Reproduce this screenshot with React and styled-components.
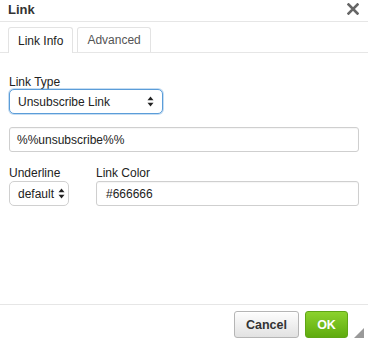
import React from "react";
import styled, { createGlobalStyle } from "styled-components";

const Global = createGlobalStyle`
  html, body { margin: 0; padding: 0; background: #fff; }
  body { font-family: "Liberation Sans", Arial, sans-serif; font-size: 12px; color: #222; }
  * { box-sizing: border-box; }
`;

const Dialog = styled.div`
  width: 368px;
  height: 340px;
  display: flex;
  flex-direction: column;
  background: #fff;
`;

const Header = styled.div`
  height: 22px;
  display: flex;
  align-items: center;
  justify-content: space-between;
  padding: 0 9px 3px 8px;
  border-bottom: 1px solid #e6e6e6;
`;

const Title = styled.div`
  font-weight: bold;
  font-size: 13px;
  color: #333;
`;

const Close = styled.div`
  width: 13px;
  height: 13px;
  display: flex;
  align-items: center;
  justify-content: center;
`;

const TabBar = styled.div`
  display: flex;
  align-items: flex-end;
  gap: 4px;
  height: 31px;
  padding: 0 8px;
  border-bottom: 1px solid #e6e6e6;
`;

const Tab = styled.div`
  height: ${(p) => (p.$active ? "26px" : "25px")};
  margin-bottom: ${(p) => (p.$active ? "-1px" : "0")};
  padding: 0 9px;
  display: flex;
  align-items: center;
  border: 1px solid #e3e3e3;
  border-bottom: none;
  border-radius: 3px 3px 0 0;
  background: #fff;
  color: ${(p) => (p.$active ? "#222" : "#555")};
  font-size: 12px;
`;

const Body = styled.div`
  flex: 1;
  padding: 23px 9px 0 9px;
  display: flex;
  flex-direction: column;
`;

const Field = styled.div`
  display: flex;
  flex-direction: column;
  width: ${(p) => p.$width || "auto"};
  flex: ${(p) => (p.$grow ? 1 : "none")};
`;

const Label = styled.div`
  font-size: 12px;
  color: #222;
  line-height: 13px;
  margin-bottom: ${(p) => p.$mb || "0"};
`;

const SelectBox = styled.div`
  height: 25px;
  width: ${(p) => p.$width};
  display: flex;
  align-items: center;
  justify-content: space-between;
  padding: 0 ${(p) => (p.$focus ? "8px" : "3px")} 0 8px;
  border: 1px solid ${(p) => (p.$focus ? "#5b9dd9" : "#d0d0d0")};
  box-shadow: ${(p) => (p.$focus ? "0 0 0 1px rgba(91,157,217,0.35)" : "none")};
  border-radius: 5px;
  background: #fff;
  color: #222;
  font-size: 12px;
  white-space: nowrap;
`;

const TextBox = styled.div`
  height: 25px;
  display: flex;
  align-items: center;
  padding: 0 ${(p) => p.$pad || "7px"};
  border: 1px solid #cfcfcf;
  border-radius: 3px;
  background: #fff;
  color: #222;
  font-size: 12px;
  box-shadow: inset 0 1px 1px rgba(0,0,0,0.04);
`;

const Row = styled.div`
  display: flex;
  gap: ${(p) => p.$gap || "0"};
  margin-top: ${(p) => p.$mt || "0"};
`;

const Footer = styled.div`
  height: 36px;
  border-top: 1px solid #e6e6e6;
  display: flex;
  justify-content: flex-end;
  align-items: flex-start;
  gap: 6px;
  padding: 6px 20px 0 0;
  position: relative;
`;

const Button = styled.div`
  height: 27px;
  width: ${(p) => p.$width};
  display: flex;
  align-items: center;
  justify-content: center;
  border-radius: 3px;
  font-weight: bold;
  font-size: 12.5px;
  border: 1px solid ${(p) => (p.$primary ? "#5fa516" : "#b5b5b5")};
  background: ${(p) =>
    p.$primary
      ? "linear-gradient(#8bd22d, #5fab0f)"
      : "linear-gradient(#fdfdfd, #e2e2e2)"};
  color: ${(p) => (p.$primary ? "#fff" : "#333")};
  box-shadow: ${(p) => (p.$primary ? "none" : "inset 0 1px 0 #fff")};
`;

const Resize = styled.div`
  position: absolute;
  right: 4px;
  bottom: 3px;
  width: 10px;
  height: 10px;
`;

const Arrows = () => (
  <svg width="7" height="11" viewBox="0 0 7 11">
    <path d="M3.5 0.5 L6.5 4.2 L0.5 4.2 Z" fill="#222" />
    <path d="M3.5 10.5 L6.5 6.8 L0.5 6.8 Z" fill="#222" />
  </svg>
);

export default function App() {
  return (
    <>
      <Global />
      <Dialog>
        <Header>
          <Title>Link</Title>
          <Close>
            <svg width="12" height="12" viewBox="0 0 12 12">
              <path d="M1.5 1.5 L10.5 10.5 M10.5 1.5 L1.5 10.5" stroke="#666" strokeWidth="2.6" strokeLinecap="square" />
            </svg>
          </Close>
        </Header>
        <TabBar>
          <Tab $active>Link Info</Tab>
          <Tab>Advanced</Tab>
        </TabBar>
        <Body>
          <Field>
            <Label>Link Type</Label>
            <SelectBox $focus $width="154px">
              <span>Unsubscribe Link</span>
              <Arrows />
            </SelectBox>
          </Field>
          <Row $mt="13px">
            <Field $grow>
              <TextBox>%%unsubscribe%%</TextBox>
            </Field>
          </Row>
          <Row $mt="15px" $gap="27px">
            <Field $width="60px">
              <Label $mb="1px">Underline</Label>
              <SelectBox $width="60px">
                <span>default</span>
                <Arrows />
              </SelectBox>
            </Field>
            <Field $grow>
              <Label $mb="1px">Link Color</Label>
              <TextBox $pad="9px">#666666</TextBox>
            </Field>
          </Row>
        </Body>
        <Footer>
          <Button $width="65px">Cancel</Button>
          <Button $primary $width="43px">OK</Button>
          <Resize>
            <svg width="10" height="10" viewBox="0 0 10 10">
              <path d="M10 0 L10 10 L0 10 Z" fill="#999" />
            </svg>
          </Resize>
        </Footer>
      </Dialog>
    </>
  );
}
